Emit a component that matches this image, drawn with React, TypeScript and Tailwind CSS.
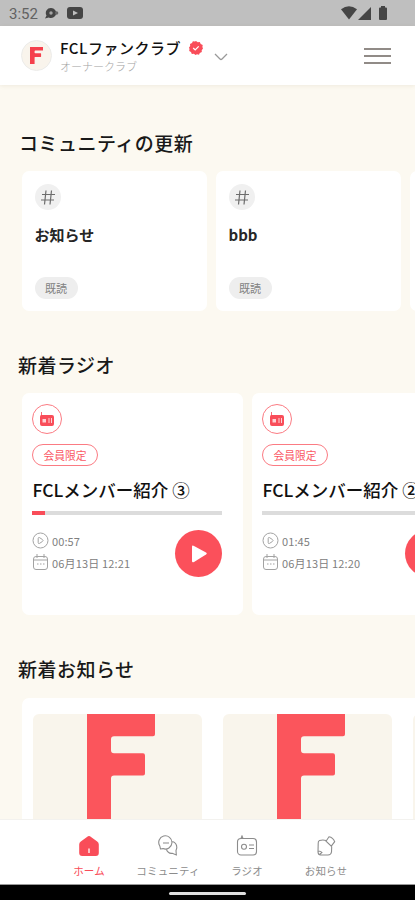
import type { ReactNode } from "react";

function StatusBar() {
  return (
    <div className="flex h-[26px] shrink-0 items-center bg-[#bfbfbf] pl-[9px] pr-[28px] text-[#454545]">
      <span className="w-[30px] whitespace-nowrap pt-[2px] font-['Roboto',sans-serif] text-[15px] leading-none text-[#626262]">3:52</span>
      <svg className="ml-[5px]" width="15" height="13" viewBox="0 0 15 13">
        <path d="M7.2 1a5 5 0 1 1-2.4 9.4L1 11.5l1.500-3A5 5 0 0 1 7.200 1Z" fill="#454545" />
        <circle cx="12.600" cy="6" r="1.700" fill="#666" />
        <circle cx="7" cy="6" r="1.700" fill="#a5a5a5" />
      </svg>
      <svg className="ml-[8px]" width="16" height="12" viewBox="0 0 16 12">
        <rect width="16" height="12" rx="3" fill="#454545" />
        <path d="m6 3.500 5 2.500-5 2.500Z" fill="#bfbfbf" />
      </svg>
      <svg className="ml-auto" width="16" height="14" viewBox="0 0 16 14">
        <path d="M0 3.300Q8-3 16 3.300L8 13.500Z" fill="#454545" />
      </svg>
      <svg className="ml-[1px]" width="13" height="13" viewBox="0 0 13 13">
        <path d="M13 0v13H0Z" fill="#454545" />
      </svg>
      <svg className="ml-[8px]" width="8" height="14" viewBox="0 0 8 14">
        <path d="M2 0h4v1.500h1q1 0 1 1V13q0 1-1 1H1q-1 0-1-1V2.500q0-1 1-1h1Z" fill="#454545" />
      </svg>
    </div>
  );
}

function LetterF({ className }: { className: string }) {
  return (
    <svg className={className} viewBox="0 0 68 105" preserveAspectRatio="none">
      <path d="M0 0h68v20q0 2-2 2H27q-3 0-3 3v11q0 3 3 3h29q2 0 2 2v18q0 2-2 2H27q-3 0-3 3v41H0Z" fill="currentColor" />
    </svg>
  );
}

function Header() {
  return (
    <header className="relative z-10 flex h-[59px] shrink-0 items-center bg-white pl-[21px] pr-[24px] shadow-[0_1px_4px_rgba(130,110,70,0.10)]">
      <div className="flex size-[31px] items-center justify-center rounded-full border border-[#ececea] bg-[#f9f4ec]">
        <LetterF className="h-[17px] w-[13px] text-[#f5404c]" />
      </div>
      <div className="ml-[8px] w-[121px] whitespace-nowrap pt-[2px]">
        <div className="text-[15px] font-medium leading-[20px] tracking-[0.5px] text-[#111]">FCLファンクラブ</div>
        <div className="text-[11px] font-light leading-[17px] text-[#a3a3a3]">オーナークラブ</div>
      </div>
      <svg className="-mt-[15px] ml-[8px]" width="14" height="14" viewBox="0 0 14 14">
        <path d="m7 0 1.700 1.300 2.100-.3.900 2 2 .9-.3 2.100L14 7.500l-1.300 1.700.1 1.900-2 .8-.8 1.800-2-.4L6.500 14l-1.600-1.200-2.100.2-.8-2-1.800-1 .3-2L0 6.500l1.200-1.600-.2-2 2-.8.900-1.800 2 .3Z" fill="#f94d59" />
        <path d="m4.200 7 2 1.900 3.500-3.500" stroke="#fff" strokeWidth="1.300" fill="none" />
      </svg>
      <svg className="ml-[11px] mt-[2px]" width="14" height="8" viewBox="0 0 14 8">
        <path d="m1 1 5 5q1 1 2 0l5-5" stroke="#999" strokeWidth="1.300" fill="none" />
      </svg>
      <div className="ml-auto flex w-[27px] flex-col gap-[5px]">
        <div className="h-[2px] bg-[#918b87]" />
        <div className="h-[2px] bg-[#918b87]" />
        <div className="h-[2px] bg-[#918b87]" />
      </div>
    </header>
  );
}

function CommunityCard({ title }: { title: string }) {
  return (
    <article className="flex h-[140px] w-[185px] shrink-0 flex-col items-start rounded-[7px] bg-white px-[12.5px] pt-[13px]">
      <div className="flex size-[26px] items-center justify-center rounded-full bg-[#f0f0f0]">
        <svg width="14" height="15" viewBox="0 0 14 15">
          <path d="M5 .5 3.500 14.500M10.500 .5 9 14.500M1 4.500h13M0 10h13" stroke="#6c6c6c" strokeWidth="1.200" fill="none" />
        </svg>
      </div>
      <h3 className="mt-[14px] whitespace-nowrap text-[15px] font-bold leading-[22px] text-[#262626]">{title}</h3>
      <span className="mt-[31px] flex h-[22px] w-[43px] items-center justify-center rounded-full bg-[#eeeeee] text-[11px] leading-none text-[#808080]">既読</span>
    </article>
  );
}

function RadioCard({ title, length, date, started }: { title: string; length: string; date: string; started: boolean }) {
  return (
    <article className="h-[222px] w-[221px] shrink-0 rounded-[7px] bg-white pl-[10px] pr-[21px] pt-[11px]">
      <div className="flex size-[30px] items-center justify-center rounded-full border border-[#fb7b83]">
        <svg width="14" height="15" viewBox="0 0 14 15">
          <path d="M2 0v3h10q2 0 2 2v7q0 2-2 2H2q-2 0-2-2V5q0-2 1.200-2V0Z" fill="#f94d59" />
          <path d="M2.500 7h3.500v3.500H2.500ZM8.500 6h1v5h-1ZM11 6h1v5h-1Z" fill="#fff" opacity=".75" />
        </svg>
      </div>
      <span className="mt-[10px] flex h-[22px] w-[66px] items-center justify-center rounded-full border border-[#fb7b83] text-[10.8px] leading-none text-[#fa5964]">会員限定</span>
      <h3 className="mt-[10px] whitespace-nowrap pl-[0.5px] text-[17.5px] font-medium leading-[27px] text-[#111]">{title}</h3>
      <div className="mt-[8px] h-[4px] w-[190px] bg-[#dcdcdc]">
        {started && <div className="h-full w-[13px] bg-[#f94d59]" />}
      </div>
      <div className="mt-[15px] flex items-start justify-between">
        <div className="flex flex-col gap-[6px] pt-[2px] text-[11px] leading-[16px] text-[#808080]">
          <div className="flex h-[16px] items-center gap-[3px]">
            <svg width="17" height="17" viewBox="0 0 17 17" fill="none" stroke="#a3a3a3" strokeWidth="1">
              <circle cx="8.500" cy="8.500" r="7.500" />
              <path d="M6.200 6.500q0-1.300 1.300-.9l2.900 1.900q1.400 1 0 2l-2.900 1.900q-1.300.6-1.300-.9Z" />
            </svg>
            <span className="pt-[1px] tracking-[0.1px]">{length}</span>
          </div>
          <div className="flex h-[16px] items-center gap-[3px]">
            <svg width="17" height="17" viewBox="0 0 17 17" fill="none" stroke="#a3a3a3" strokeWidth="1">
              <rect x="1.500" y="2.500" width="14" height="13" rx="2.500" />
              <path d="M1.500 6h14M5 0v4M12 0v4M5 10h1.500M8 10h1.500M11 10h1.500" />
            </svg>
            <span className="whitespace-nowrap pt-[1px] tracking-[0.15px]">{date}</span>
          </div>
        </div>
        <div className="flex size-[47px] shrink-0 items-center justify-center rounded-full bg-[#fb505b]">
          <svg width="16" height="18" viewBox="0 0 16 18">
            <path d="M1 1.500Q1 0 3 1l12 6.500q1.500 1 0 2L3 17q-2 1-2-1Z" fill="#fff" />
          </svg>
        </div>
      </div>
    </article>
  );
}

function Heading({ children }: { children: ReactNode }) {
  return <h2 className="h-[28px] whitespace-nowrap text-[19px] font-medium leading-[27px] tracking-[0.5px] text-[#191919]">{children}</h2>;
}

function NewsThumb() {
  return (
    <div className="h-[120px] w-[169px] shrink-0 overflow-hidden rounded-t-[6px] bg-[#f9f5ec] pl-[54.5px]">
      <LetterF className="h-[106px] w-[68px] text-[#fb555c]" />
    </div>
  );
}

function NavItem({ label, active, children }: { label: string; active?: boolean; children: ReactNode }) {
  return (
    <div className={active ? "flex w-[79px] flex-col items-center text-[#f94d59]" : "flex w-[79px] flex-col items-center text-[#8c8c8c]"}>
      <svg width="22" height="22" viewBox="0 0 22 22" fill="none" stroke="currentColor" strokeWidth="1.100">
        {children}
      </svg>
      <span className="mt-[6px] whitespace-nowrap text-[10.5px] leading-[16px] tracking-[0.15px]">{label}</span>
    </div>
  );
}

export default function App() {
  return (
    <div className="flex h-[900px] w-[415px] flex-col overflow-hidden bg-[#fcf9f1] font-['Noto_Sans_CJK_JP',sans-serif]">
      <StatusBar />
      <Header />
      <main className="min-h-0 flex-1 overflow-hidden">
        <section className="pl-[19px] pt-[44px]">
          <Heading>コミュニティの更新</Heading>
          <div className="ml-[3px] mt-[14px] flex gap-[9px] overflow-hidden">
            <CommunityCard title="お知らせ" />
            <CommunityCard title="bbb" />
            <div className="h-[140px] w-[186px] shrink-0 rounded-[7px] bg-white" />
          </div>
        </section>
        <section className="pl-[18px] pt-[40px]">
          <Heading>新着ラジオ</Heading>
          <div className="ml-[4px] mt-[14px] flex gap-[9px] overflow-hidden">
            <RadioCard title="FCLメンバー紹介 ③" length="00:57" date="06月13日 12:21" started />
            <RadioCard title="FCLメンバー紹介 ②" length="01:45" date="06月13日 12:20" started={false} />
          </div>
        </section>
        <section className="pl-[18px] pt-[40px]">
          <Heading>新着お知らせ</Heading>
          <div className="ml-[4px] mt-[15px] flex gap-[21px] overflow-hidden rounded-tl-[7px] bg-white pl-[10.5px] pt-[16px]">
            <NewsThumb />
            <NewsThumb />
            <NewsThumb />
          </div>
        </section>
      </main>
      <nav className="flex h-[65px] shrink-0 justify-center border-t border-[#f3f2ef] bg-white pt-[15px]">
        <NavItem label="ホーム" active>
          <path d="M2.800 6.500 10 1.300q1-.8 2 0l7.200 5.200q1.600 1.200 1.600 3V18q0 3-3 3H4.200q-3 0-3-3V9.500q0-1.800 1.600-3Z" fill="currentColor" stroke="none" />
          <path d="M11 13.500v4.500" stroke="#fff" strokeWidth="1.300" />
        </NavItem>
        <NavItem label="コミュニティ">
          <path d="M3.500 14 2.800 11A6.600 6.600 0 1 1 6 13.600ZM6 8h6M15.500 6.500q4.500 1.500 4.300 6.500l-.8 2.500.3 4.500-4-1.700q-4 .8-6-4" />
        </NavItem>
        <NavItem label="ラジオ">
          <rect x="1.500" y="3.500" width="19" height="16.500" rx="3.500" />
          <path d="M5 3.500 6 1l1 2.500M13 10h5M13 13.500h5" />
          <circle cx="8" cy="11.800" r="2.500" />
        </NavItem>
        <NavItem label="お知らせ">
          <path d="M11 5.500q-3-1-6.500 0-1.500.5-1.300 3L3 17q.2 3 2.500 3H13q3 0 3.500-3l.2-5.500M11 6.200l3-4.400q4 .7 5.700 4.900l-3.400 4.500ZM3 16q3 0 4 1.500l-2.500 2" />
        </NavItem>
      </nav>
      <div className="flex h-[16px] shrink-0 justify-center border-t border-[#999] bg-black pt-[7px]">
        <div className="h-[3px] w-[77px] rounded-full bg-[#dedede]" />
      </div>
    </div>
  );
}
